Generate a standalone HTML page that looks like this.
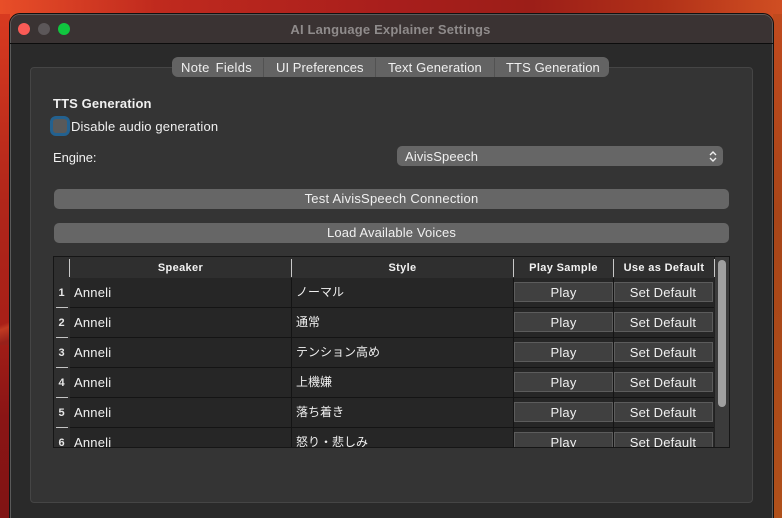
<!DOCTYPE html>
<html>
<head>
<meta charset="utf-8">
<style>
html,body{margin:0;padding:0;width:782px;height:518px;overflow:hidden;background:#a82018}
body{position:relative;font-family:"Liberation Sans","Noto Sans CJK JP",sans-serif;color:#f0f0f0;font-size:13px}
div{position:absolute;box-sizing:border-box}
.t{white-space:nowrap;line-height:16px;height:16px}
.c{text-align:center}
.hd{font-weight:bold;font-size:11px;letter-spacing:.35px;color:#f2f2f2;top:260px}
.v{background:#c8c8c8;width:1px;top:259px;height:18px}
.rule{left:70px;width:644px;height:1px;background:#141414}
.num{left:54px;width:15px;text-align:center;font-size:11px;font-weight:bold;color:#e8e8e8}
.stub{left:56px;width:12px;height:1px;background:#c4c4c4}
.b{background:#404040;border:1px solid #5c5c5c;height:20px}
.b1{left:514px;width:99px}
.b2{left:614px;width:99px}
.nm{left:74px;letter-spacing:.2px}
.st{left:296px;font-size:12px}
.pl{left:514px;width:99px;text-align:center;letter-spacing:.2px}
.sd{left:614px;width:98px;text-align:center;letter-spacing:.2px}
</style>
</head>
<body>
<div style="left:0;top:0;width:782px;height:518px;background:linear-gradient(90deg,#e84e28 0,#c02a1e 20%,#a81e1c 50%,#9c1e18 68%,#b03018 84%,#d04e22 100%)"></div>
<div style="left:0;top:14px;width:10px;height:504px;background:linear-gradient(180deg,#d83a20 0,#b0261a 38%,#a82018 60%,#8a1515 80%,#801414 100%)"></div>
<div style="left:0;top:315px;width:10px;height:30px;background:linear-gradient(160deg,#a82018 0,#a82018 30%,#c03a22 45%,#98201a 85%)"></div>
<div style="left:773px;top:14px;width:9px;height:504px;background:linear-gradient(180deg,#c04a1e 0,#a84518 40%,#b0501a 100%)"></div>

<!-- window -->
<div style="left:10px;top:14px;width:763px;height:520px;background:#2a2a2a;border-radius:10px 10px 0 0;border:1px solid #5a5a5a;border-bottom:0;outline:1px solid #111;outline-offset:0"></div>
<div style="left:11px;top:15px;width:761px;height:28px;background:#3a3333;border-radius:9px 9px 0 0"></div>
<div style="left:10px;top:43px;width:763px;height:1px;background:#0c0c0c"></div>
<div style="left:18px;top:23px;width:12px;height:12px;border-radius:50%;background:#fb5b56"></div>
<div style="left:38px;top:23px;width:12px;height:12px;border-radius:50%;background:#5c5759"></div>
<div style="left:58px;top:23px;width:12px;height:12px;border-radius:50%;background:#10c63f"></div>
<div class="t c" style="left:10px;width:761px;top:22px;font-weight:bold;font-size:13px;letter-spacing:.17px;color:#8f8b8b">AI Language Explainer Settings</div>

<!-- tab panel -->
<div style="left:30px;top:67px;width:723px;height:436px;background:#343434;border:1px solid #454545;border-radius:4px"></div>

<!-- tabs -->
<div style="left:172px;top:57px;width:437px;height:20px;background:#636363;border-radius:6px"></div>
<div style="left:263px;top:58px;width:1px;height:19px;background:#525252"></div>
<div style="left:375px;top:58px;width:1px;height:19px;background:#525252"></div>
<div style="left:494px;top:58px;width:1px;height:19px;background:#525252"></div>
<div class="t" style="left:181px;top:60px;letter-spacing:.3px;word-spacing:2px">Note Fields</div>
<div class="t" style="left:276px;top:60px;letter-spacing:.06px">UI Preferences</div>
<div class="t" style="left:388px;top:60px;letter-spacing:.14px">Text Generation</div>
<div class="t" style="left:506px;top:60px;letter-spacing:.1px">TTS Generation</div>

<!-- section -->
<div class="t" style="left:53px;top:96px;font-weight:bold;letter-spacing:.13px">TTS Generation</div>
<div style="left:50px;top:116px;width:20px;height:20px;border-radius:6px;background:#23618f"></div>
<div style="left:53px;top:119px;width:14px;height:14px;border-radius:3px;background:#595959"></div>
<div class="t" style="left:71px;top:119px;letter-spacing:.14px">Disable audio generation</div>
<div class="t" style="left:53px;top:150px;letter-spacing:-.1px">Engine:</div>

<!-- select -->
<div style="left:397px;top:146px;width:326px;height:20px;background:#666;border-radius:5px"></div>
<div class="t" style="left:405px;top:149px;letter-spacing:.15px">AivisSpeech</div>
<svg style="position:absolute;left:707px;top:150px" width="12" height="13" viewBox="0 0 12 13"><path d="M3 5 L6 2 L9 5 M3 8 L6 11 L9 8" fill="none" stroke="#eee" stroke-width="1.4"/></svg>

<!-- buttons -->
<div style="left:54px;top:189px;width:675px;height:20px;background:#666;border-radius:5px"></div>
<div class="t c" style="left:54px;width:675px;top:191px;letter-spacing:.23px">Test AivisSpeech Connection</div>
<div style="left:54px;top:223px;width:675px;height:20px;background:#666;border-radius:5px"></div>
<div class="t c" style="left:54px;width:675px;top:225px;letter-spacing:.13px">Load Available Voices</div>

<!-- table -->
<div style="left:53px;top:256px;width:677px;height:192px;background:#262626;border:1px solid #161616;overflow:hidden"></div>
<div style="left:54px;top:257px;width:660px;height:21px;background:#2f2f2f"></div>
<div style="left:54px;top:278px;width:16px;height:169px;background:#2f2f2f"></div>
<div style="left:714px;top:257px;width:15px;height:190px;background:#3b3b3b;border-left:1px solid #222"></div>
<div style="left:718px;top:260px;width:8px;height:147px;background:#a0a0a0;border-radius:4px"></div>

<div class="v" style="left:69px"></div>
<div class="v" style="left:291px"></div>
<div class="v" style="left:513px"></div>
<div class="v" style="left:613px"></div>
<div class="v" style="left:714px"></div>
<div class="t c hd" style="left:70px;width:221px">Speaker</div>
<div class="t c hd" style="left:292px;width:221px">Style</div>
<div class="t c hd" style="left:514px;width:99px">Play Sample</div>
<div class="t c hd" style="left:614px;width:100px">Use as Default</div>

<div style="left:291px;top:278px;width:1px;height:169px;background:#141414"></div>
<div style="left:513px;top:278px;width:1px;height:169px;background:#141414"></div>
<div style="left:613px;top:278px;width:1px;height:169px;background:#141414"></div>

<div class="rule" style="top:307px"></div>
<div class="rule" style="top:337px"></div>
<div class="rule" style="top:367px"></div>
<div class="rule" style="top:397px"></div>
<div class="rule" style="top:427px"></div>
<div class="stub" style="top:307px"></div>
<div class="stub" style="top:337px"></div>
<div class="stub" style="top:367px"></div>
<div class="stub" style="top:397px"></div>
<div class="stub" style="top:427px"></div>

<div class="b b1" style="top:282px"></div><div class="b b2" style="top:282px"></div>
<div class="b b1" style="top:312px"></div><div class="b b2" style="top:312px"></div>
<div class="b b1" style="top:342px"></div><div class="b b2" style="top:342px"></div>
<div class="b b1" style="top:372px"></div><div class="b b2" style="top:372px"></div>
<div class="b b1" style="top:402px"></div><div class="b b2" style="top:402px"></div>
<div class="b b1" style="top:432px;height:15px;border-bottom:0"></div><div class="b b2" style="top:432px;height:15px;border-bottom:0"></div>

<div class="t num" style="top:285px">1</div><div class="t nm" style="top:285px">Anneli</div><div class="t st" style="top:284px">ノーマル</div><div class="t pl" style="top:285px">Play</div><div class="t sd" style="top:285px">Set Default</div>
<div class="t num" style="top:315px">2</div><div class="t nm" style="top:315px">Anneli</div><div class="t st" style="top:314px">通常</div><div class="t pl" style="top:315px">Play</div><div class="t sd" style="top:315px">Set Default</div>
<div class="t num" style="top:345px">3</div><div class="t nm" style="top:345px">Anneli</div><div class="t st" style="top:344px">テンション高め</div><div class="t pl" style="top:345px">Play</div><div class="t sd" style="top:345px">Set Default</div>
<div class="t num" style="top:375px">4</div><div class="t nm" style="top:375px">Anneli</div><div class="t st" style="top:374px">上機嫌</div><div class="t pl" style="top:375px">Play</div><div class="t sd" style="top:375px">Set Default</div>
<div class="t num" style="top:405px">5</div><div class="t nm" style="top:405px">Anneli</div><div class="t st" style="top:404px">落ち着き</div><div class="t pl" style="top:405px">Play</div><div class="t sd" style="top:405px">Set Default</div>
<div style="left:54px;top:432px;width:660px;height:15px;overflow:hidden">
<div class="t" style="left:0;width:15px;text-align:center;font-size:11px;font-weight:bold;color:#e8e8e8;top:3px">6</div>
<div class="t" style="left:20px;top:3px;letter-spacing:.2px">Anneli</div>
<div class="t" style="left:242px;top:2px;font-size:12px">怒り・悲しみ</div>
<div class="t c" style="left:460px;width:99px;top:3px;letter-spacing:.2px">Play</div>
<div class="t c" style="left:560px;width:98px;top:3px;letter-spacing:.2px">Set Default</div>
</div>
</body>
</html>
